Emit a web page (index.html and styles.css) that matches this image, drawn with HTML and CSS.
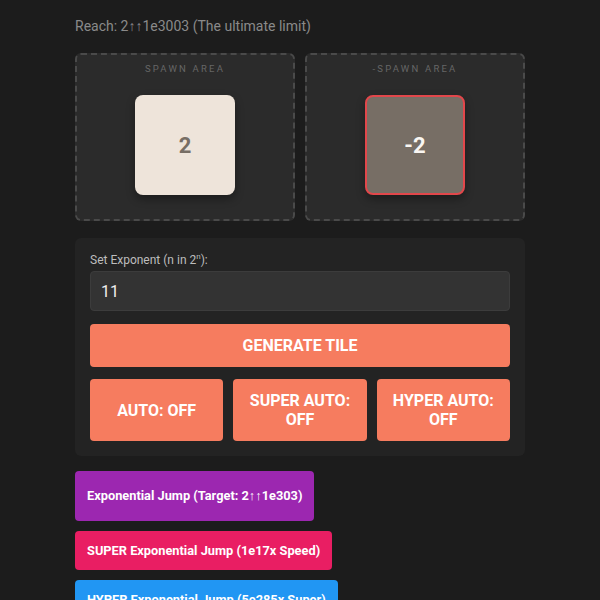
FILE: index.html
```html
<!DOCTYPE html>
<html>
<head>
<meta charset="utf-8">
<link rel="stylesheet" href="styles.css">
</head>
<body>
<div class="container">
  <div class="reach">Reach: 2↑↑1e3003 (The ultimate limit)</div>
  <div class="spawns">
    <div class="spawn">
      <div class="spawn-label">SPAWN AREA</div>
      <div class="tile tile-pos">2</div>
    </div>
    <div class="spawn">
      <div class="spawn-label">-SPAWN AREA</div>
      <div class="tile tile-neg">-2</div>
    </div>
  </div>
  <div class="panel">
    <label class="exp-label">Set Exponent (n in 2<sup>n</sup>):</label>
    <input class="exp-input" type="text" value="11">
    <button class="btn btn-gen">GENERATE TILE</button>
    <div class="auto-row">
      <button class="btn btn-auto">AUTO: OFF</button>
      <button class="btn btn-auto">SUPER AUTO: OFF</button>
      <button class="btn btn-auto">HYPER AUTO: OFF</button>
    </div>
  </div>
  <div class="jumps">
    <button class="jump jump-exp">Exponential Jump (Target: 2↑↑1e303)</button>
    <button class="jump jump-super">SUPER Exponential Jump (1e17x Speed)</button>
    <button class="jump jump-hyper">HYPER Exponential Jump (5e285x Super)</button>
  </div>
</div>
</body>
</html>
```

FILE: styles.css
```css
html, body {
  margin: 0;
  padding: 0;
  background: #1c1c1c;
  font-family: Roboto, "Liberation Sans", sans-serif;
  overflow: hidden;
}
.container {
  width: 450px;
  margin: 0 auto;
  padding-top: 18px;
}
.reach {
  color: #8a8a8a;
  font-size: 14px;
  line-height: 16px;
  margin-bottom: 19px;
}
.spawns {
  display: flex;
  gap: 10px;
}
.spawn {
  flex: 1;
  height: 168px;
  box-sizing: border-box;
  border: 2px dashed #4a4a4a;
  border-radius: 6px;
  background: #2b2b2b;
  padding-top: 8px;
  display: flex;
  flex-direction: column;
  align-items: center;
}
.spawn-label {
  font-size: 9.5px;
  line-height: 12px;
  letter-spacing: 2.2px;
  color: #666;
  margin-bottom: 20px;
}
.tile {
  width: 100px;
  height: 100px;
  box-sizing: border-box;
  border-radius: 8px;
  display: flex;
  align-items: center;
  justify-content: center;
  font-size: 22px;
  font-weight: bold;
  box-shadow: 0 4px 8px rgba(0,0,0,0.35);
}
.tile-pos {
  background: #eee4da;
  color: #776e65;
}
.tile-neg {
  background: #776e65;
  color: #f9f6f2;
  border: 2px solid #e2474b;
}
.panel {
  margin-top: 17px;
  background: #232323;
  border-radius: 6px;
  padding: 15px;
  display: flex;
  flex-direction: column;
}
.exp-label {
  font-size: 12px;
  line-height: 14px;
  color: #bdbdbd;
  margin-bottom: 4px;
}
.exp-label sup {
  font-size: 8px;
  line-height: 0;
}
.exp-input {
  height: 40px;
  box-sizing: border-box;
  background: #333;
  border: 1px solid #3c3c3c;
  border-radius: 4px;
  color: #eee;
  font-family: Roboto, "Liberation Sans", sans-serif;
  font-size: 16px;
  padding: 0 10px;
  margin: 0 0 13px 0;
  outline: none;
}
.btn {
  background: #f67c5f;
  color: #fff;
  border: none;
  border-radius: 4px;
  font-family: Roboto, "Liberation Sans", sans-serif;
  font-weight: bold;
  font-size: 16px;
  line-height: 19px;
  padding: 12px;
}
.btn-gen {
  margin-bottom: 12px;
}
.auto-row {
  display: flex;
  gap: 10px;
}
.btn-auto {
  flex: 1;
  height: 62px;
  padding: 0 12px;
}
.jumps {
  margin-top: 15px;
  display: flex;
  flex-direction: column;
  align-items: flex-start;
  gap: 10px;
}
.jump {
  border: none;
  border-radius: 4px;
  color: #fff;
  font-family: Roboto, "Liberation Sans", sans-serif;
  font-weight: bold;
  font-size: 12.8px;
  line-height: 15px;
  padding: 12px;
}
.jump-exp {
  background: #9c27b0;
  padding: 17px 12px 18px;
}
.jump-super {
  background: #e91e63;
}
.jump-hyper {
  background: #2196f3;
}
```
